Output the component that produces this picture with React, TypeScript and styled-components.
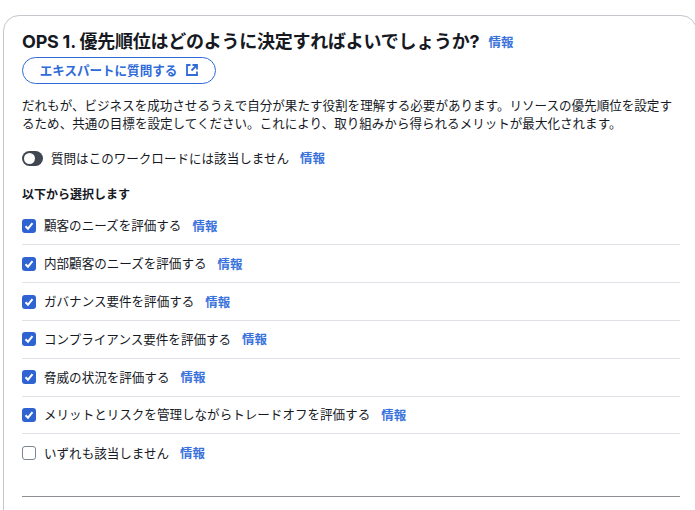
import React from "react";
import styled, { createGlobalStyle } from "styled-components";

const Global = createGlobalStyle`
  html, body { margin: 0; padding: 0; background: #fff; overflow: hidden; }
  body { font-family: "Inter", "Noto Sans CJK JP", sans-serif; color: #16191f; }
`;

const Page = styled.div`
  height: 510px;
  overflow: hidden;
  padding: 15px 0 0 3px;
  box-sizing: border-box;
`;

const Card = styled.section`
  width: 694px;
  height: 560px;
  box-sizing: border-box;
  border: 1px solid #c6c6cd;
  border-radius: 16px;
  padding: 13px 15px 0 18px;
`;

const TitleRow = styled.div`
  display: flex;
  align-items: center;
  gap: 9px;
  height: 26px;
`;

const Title = styled.h2`
  margin: 0;
  font: 700 18px/26px "Inter", "Noto Sans CJK JP", sans-serif;
  color: #16191f;
  letter-spacing: -0.24px;
`;

const Info = styled.a`
  font: 700 12.5px/16px "Noto Sans CJK JP", sans-serif;
  color: #3a72dc;
  flex: none;
`;

const ExpertButton = styled.button`
  display: flex;
  align-items: center;
  justify-content: center;
  gap: 9px;
  width: 194px;
  height: 27px;
  margin-top: 2px;
  padding: 0 0 1px;
  box-sizing: border-box;
  border: 1px solid #2f6bd8;
  border-radius: 14px;
  background: #fff;
  color: #2f6bd8;
  font: 700 12.55px/16px "Noto Sans CJK JP", sans-serif;
`;

const Description = styled.p`
  margin: 12px 0 0;
  width: 654px;
  font: 400 12.55px/18px "Noto Sans CJK JP", sans-serif;
  color: #16191f;
`;

const ToggleRow = styled.div`
  display: flex;
  align-items: center;
  height: 18px;
  margin-top: 17px;
`;

const Toggle = styled.span`
  position: relative;
  width: 21px;
  height: 15px;
  flex: none;
  border-radius: 8px;
  background: #414750;
  margin-right: 8px;
  &::after {
    content: "";
    position: absolute;
    left: 2px;
    top: 2px;
    width: 11px;
    height: 11px;
    border-radius: 50%;
    background: #fff;
  }
`;

const Label = styled.span`
  font: 400 12.55px/18px "Noto Sans CJK JP", sans-serif;
  color: #16191f;
  margin: 0 11px 1px 0;
`;

const GroupTitle = styled.div`
  margin-top: 18px;
  font: 700 12px/18px "Noto Sans CJK JP", sans-serif;
  color: #16191f;
`;

const List = styled.div`
  margin-top: 4.6px;
  width: 658px;
`;

const Row = styled.div`
  display: flex;
  align-items: center;
  height: 37.8px;
  box-sizing: border-box;
  border-bottom: 1px solid #dfe1e6;
  &:last-child { border-bottom: none; }
`;

const Box = styled.span<{ $on: boolean }>`
  display: flex;
  align-items: center;
  justify-content: center;
  flex: none;
  width: 14px;
  height: 14px;
  box-sizing: border-box;
  margin-right: 8px;
  border-radius: 3px;
  background: ${(p) => (p.$on ? "#2f63d2" : "#fff")};
  border: ${(p) => (p.$on ? "none" : "1.5px solid #7d8590")};
`;

const Rule = styled.hr`
  width: 658px;
  height: 1px;
  margin: 23.4px 0 0;
  border: none;
  background: #8c8f94;
`;

const items: [string, boolean][] = [
  ["顧客のニーズを評価する", true],
  ["内部顧客のニーズを評価する", true],
  ["ガバナンス要件を評価する", true],
  ["コンプライアンス要件を評価する", true],
  ["脅威の状況を評価する", true],
  ["メリットとリスクを管理しながらトレードオフを評価する", true],
  ["いずれも該当しません", false],
];

export default function App() {
  return (
    <Page>
      <Global />
      <Card>
        <TitleRow>
          <Title>OPS 1. 優先順位はどのように決定すればよいでしょうか?</Title>
          <Info>情報</Info>
        </TitleRow>
        <ExpertButton>
          エキスパートに質問する
          <svg width="12" height="12" viewBox="0 0 12 12" fill="none" stroke="#2f6bd8" strokeWidth="1.8">
            <path d="M4.5 1H1v10h10V7.5" />
            <path d="M6.5 1H11v4.5M11 1 5.5 6.5" />
          </svg>
        </ExpertButton>
        <Description>
          だれもが、ビジネスを成功させるうえで自分が果たす役割を理解する必要があります。リソースの優先順位を設定するため、共通の目標を設定してください。これにより、取り組みから得られるメリットが最大化されます。
        </Description>
        <ToggleRow>
          <Toggle />
          <Label>質問はこのワークロードには該当しません</Label>
          <Info>情報</Info>
        </ToggleRow>
        <GroupTitle>以下から選択します</GroupTitle>
        <List>
          {items.map(([text, on]) => (
            <Row key={text}>
              <Box $on={on}>
                {on && (
                  <svg width="10" height="10" viewBox="0 0 10 10" fill="none" stroke="#fff" strokeWidth="2">
                    <path d="M1.5 5.2 4 7.7 8.5 2.2" />
                  </svg>
                )}
              </Box>
              <Label>{text}</Label>
              <Info>情報</Info>
            </Row>
          ))}
        </List>
        <Rule />
      </Card>
    </Page>
  );
}
